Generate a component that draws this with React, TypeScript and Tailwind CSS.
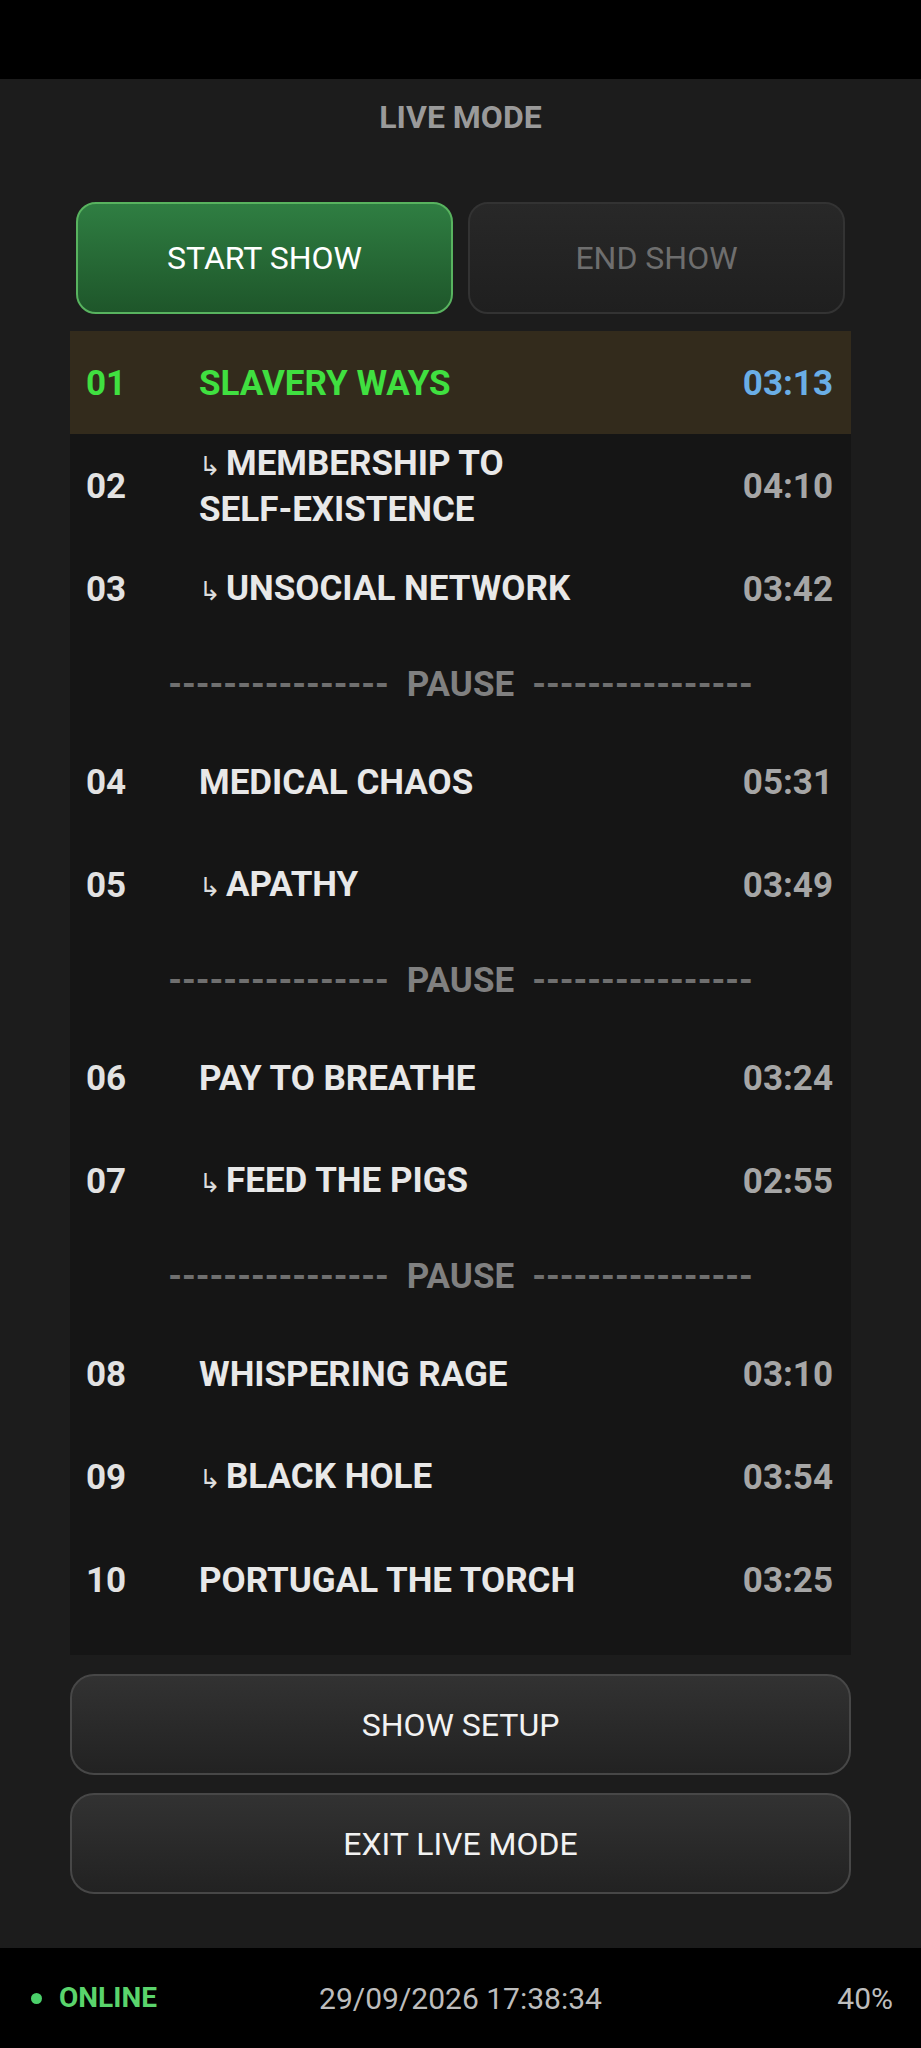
type Song = { no: string; title: string; time: string; segue?: boolean; current?: boolean };
type Item = Song | { pause: true };

const setlist: Item[] = [
  { no: "01", title: "SLAVERY WAYS", time: "03:13", current: true },
  { no: "02", title: "MEMBERSHIP TO SELF-EXISTENCE", time: "04:10", segue: true },
  { no: "03", title: "UNSOCIAL NETWORK", time: "03:42", segue: true },
  { pause: true },
  { no: "04", title: "MEDICAL CHAOS", time: "05:31" },
  { no: "05", title: "APATHY", time: "03:49", segue: true },
  { pause: true },
  { no: "06", title: "PAY TO BREATHE", time: "03:24" },
  { no: "07", title: "FEED THE PIGS", time: "02:55", segue: true },
  { pause: true },
  { no: "08", title: "WHISPERING RAGE", time: "03:10" },
  { no: "09", title: "BLACK HOLE", time: "03:54", segue: true },
  { no: "10", title: "PORTUGAL THE TORCH", time: "03:25" },
];

const PauseRow = () => (
  <div className="flex h-[90px] items-center justify-center gap-[18px] font-bold text-[35px] text-[#808080]">
    <span className="text-[#6f6f6f]">----------------</span>
    <span>PAUSE</span>
    <span className="text-[#6f6f6f]">----------------</span>
  </div>
);

const SongRow = ({ song }: { song: Song }) => (
  <div
    className={`flex min-h-[103px] items-center pl-4 pr-[18px] pt-[3px] font-bold text-[35px] ${
      song.current ? "bg-[#332b1c]" : ""
    }`}
  >
    <div className={`w-[113px] shrink-0 ${song.current ? "text-[#40e040]" : "text-[#e2e2e2]"}`}>{song.no}</div>
    <div className={`min-w-0 flex-1 pr-10 leading-[44px] ${song.current ? "text-[#40e040]" : "text-[#e8e8e8]"}`}>
      {song.segue && <span className="mr-[5px] font-normal text-[26px] text-[#dcdcdc]">↳</span>}
      {song.title.split(" ").map((word, i) => (
        <span key={i}>
          {i > 0 && " "}
          <span className="whitespace-nowrap">{word}</span>
        </span>
      ))}
    </div>
    <div className={`shrink-0 ${song.current ? "text-[#6aaee6]" : "text-[#a6a6a6]"}`}>{song.time}</div>
  </div>
);

export default function App() {
  return (
    <div className="min-h-screen bg-black font-['Roboto',sans-serif]">
      <div className="h-[79px] bg-black" />

      <main className="flex h-[1869px] flex-col bg-[#1c1c1c] px-[70px]">
        <h1 className="pt-[18px] text-center font-bold text-[32px] leading-[40px] text-[#9a9a9a]">LIVE MODE</h1>

        <div className="mt-[65px] flex gap-[15px] px-[6px]">
          <button className="h-[112px] flex-1 rounded-[20px] border-2 border-[#58b35f] bg-gradient-to-b from-[#2f7e42] to-[#1e562a] text-[32px] text-white">
            START SHOW
          </button>
          <button className="h-[112px] flex-1 rounded-[20px] border-2 border-[#333333] bg-gradient-to-b from-[#282828] to-[#1f1f1f] text-[32px] text-[#6e6e6e]">
            END SHOW
          </button>
        </div>

        <div className="mt-[17px] bg-[#151515] pb-[24px]">
          {setlist.map((item, i) =>
            "pause" in item ? <PauseRow key={i} /> : <SongRow key={i} song={item} />
          )}
        </div>

        <div className="mt-[19px] flex flex-col gap-[18px]">
          <button className="h-[101px] rounded-[24px] border-2 border-[#474747] bg-gradient-to-b from-[#323232] to-[#222222] text-[32px] text-[#f2f2f2]">
            SHOW SETUP
          </button>
          <button className="h-[101px] rounded-[24px] border-2 border-[#474747] bg-gradient-to-b from-[#323232] to-[#222222] text-[32px] text-[#f2f2f2]">
            EXIT LIVE MODE
          </button>
        </div>
      </main>

      <footer className="grid h-[100px] grid-cols-[1fr_auto_1fr] items-center bg-black px-[28px] text-[30px]">
        <div className="flex items-center gap-[17px] pl-[3px] text-[28px]">
          <span className="h-[11px] w-[11px] rounded-full bg-[#4bd06a]" />
          <span className="font-bold text-[#5ad46c]">ONLINE</span>
        </div>
        <div className="text-[#bdbdbd]">29/09/2026 17:38:34</div>
        <div className="text-right text-[#bdbdbd]">40%</div>
      </footer>
    </div>
  );
}
